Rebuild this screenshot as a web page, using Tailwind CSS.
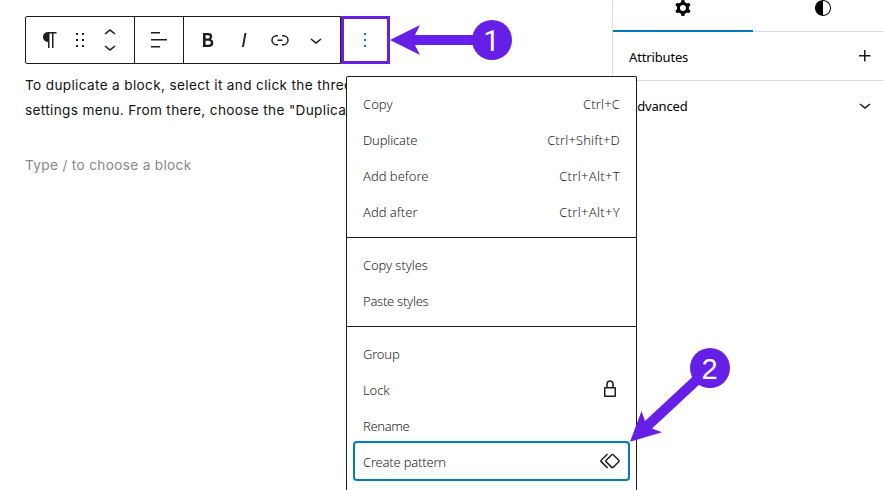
<!DOCTYPE html>
<html lang="en">
<head>
<meta charset="utf-8">
<title>Block editor</title>
<script src="https://cdn.jsdelivr.net/npm/@tailwindcss/browser@4"></script>
</head>
<body class="relative h-[490px] w-[884px] overflow-hidden bg-white font-['Noto_Sans',sans-serif] text-[13px] text-[#1e1e1e]">
<div class="flex h-full">
  <main class="w-[612px] shrink-0 pl-[25px] pt-4">
    <div class="flex h-12 w-[365px]">
      <div class="flex w-[316px] rounded-l-xs border border-[#1e1e1e]">
        <div class="flex w-[109px] items-center border-r border-[#1e1e1e] pl-3">
          <svg class="size-6 shrink-0" viewBox="0 0 24 24" fill="currentColor"><path d="m9.99609 14v-.2251l.00391.0001v6.225h1.5v-14.5h2.5v14.5h1.5v-14.5h3v-1.5h-8.50391c-2.76142 0-5 2.23858-5 5 0 2.7614 2.23858 5 5 5z"/></svg>
          <svg class="ml-[6px] size-6 shrink-0" viewBox="0 0 24 24" fill="currentColor"><path d="M8 7h2V5H8v2zm0 6h2v-2H8v2zm0 6h2v-2H8v2zm6-14v2h2V5h-2zm0 8h2v-2h-2v2zm0 6h2v-2h-2v2z"/></svg>
          <div class="ml-[6px] flex w-6 shrink-0 flex-col">
            <svg class="h-[19px] w-6" viewBox="0 0 24 19" fill="currentColor"><path d="M6.5 12.4L12 8l5.5 4.4-.9 1.2L12 10l-4.5 3.6-1-1.2z"/></svg>
            <svg class="h-[19px] w-6" viewBox="0 5 24 19" fill="currentColor"><path d="M17.5 11.6L12 16l-5.5-4.4.9-1.2L12 14l4.5-3.6 1 1.2z"/></svg>
          </div>
        </div>
        <div class="flex w-[49px] items-center border-r border-[#1e1e1e] pl-3">
          <svg class="size-6 shrink-0" viewBox="0 0 24 24" fill="currentColor"><path d="M13 5.5H4V4h9v1.5Zm7 7H4V11h16v1.5Zm-7 7H4V18h9v1.5Z"/></svg>
        </div>
        <div class="flex items-center gap-3 pl-3">
          <svg class="size-6 shrink-0" viewBox="0 0 24 24" fill="currentColor"><path d="M14.7 11.3c1-.6 1.5-1.6 1.5-3 0-2.3-1.3-3.4-4-3.4H7v14h5.8c1.4 0 2.5-.3 3.3-1 .8-.7 1.2-1.7 1.2-2.9.1-1.9-.8-3.1-2.6-3.7zm-5.1-4h2.3c.6 0 1.1.1 1.4.4.3.3.5.7.5 1.2s-.2 1-.5 1.2c-.3.3-.8.4-1.4.4H9.6V7.3zm4.6 9c-.4.3-1 .4-1.7.4H9.6v-3.9h2.9c.7 0 1.3.2 1.7.5.4.3.6.8.6 1.5s-.2 1.2-.6 1.5z"/></svg>
          <svg class="size-6 shrink-0" viewBox="0 0 24 24" fill="currentColor"><path d="M12.5 5L10 19h1.9l2.5-14z"/></svg>
          <svg class="size-6 shrink-0" viewBox="0 0 24 24" fill="currentColor"><path d="M10 17.389H8.444A5.194 5.194 0 1 1 8.444 7H10v1.5H8.444a3.694 3.694 0 0 0 0 7.389H10v1.5ZM14 7h1.556a5.194 5.194 0 0 1 0 10.39H14v-1.5h1.556a3.694 3.694 0 0 0 0-7.39H14V7Zm-4.5 6h5v-1.5h-5V13Z"/></svg>
          <svg class="size-6 shrink-0" viewBox="0 0 24 24" fill="currentColor"><path d="M17.5 11.6L12 16l-5.5-4.4.9-1.2L12 14l4.5-3.6 1 1.2z"/></svg>
        </div>
      </div>
      <div class="flex w-[49px] items-center border-3 border-[#651fe7] pl-[9px]">
        <svg class="size-6 shrink-0 text-[#007cba]" viewBox="0 0 24 24" fill="currentColor"><path d="M13 19h-2v-2h2v2zm0-6h-2v-2h2v2zm0-6h-2V5h2v2z"/></svg>
      </div>
    </div>
    <div class="mt-[9px] whitespace-nowrap font-['Inter',sans-serif] text-[13.6px] leading-[25px] tracking-[0.35px] text-[#111]">
      <p>To duplicate a block, select it and click the three<br>settings menu. From there, choose the "Duplicate</p>
      <p class="mt-[30px] text-[#888]">Type / to choose a block</p>
    </div>
  </main>
  <aside class="min-w-0 flex-1 border-l border-[#ddd]">
    <div class="flex h-8 border-b border-[#ddd]">
      <div class="flex h-8 w-[140px] shrink-0 justify-center border-b-2 border-[#007cba] text-black">
        <svg class="-mt-1 size-6" viewBox="0 0 24 24" fill="currentColor"><path fill-rule="evenodd" d="M10.289 4.836A1 1 0 0111.275 4h1.306a1 1 0 01.987.836l.244 1.466c.787.26 1.503.679 2.108 1.218l1.393-.522a1 1 0 011.216.437l.653 1.13a1 1 0 01-.23 1.273l-1.148.944a6.025 6.025 0 010 2.435l1.149.946a1 1 0 01.23 1.272l-.653 1.13a1 1 0 01-1.216.437l-1.394-.522c-.605.54-1.32.958-2.108 1.218l-.244 1.466a1 1 0 01-.987.836h-1.306a1 1 0 01-.986-.836l-.244-1.466a5.995 5.995 0 01-2.108-1.218l-1.394.522a1 1 0 01-1.217-.436l-.653-1.131a1 1 0 01.23-1.272l1.149-.946a6.026 6.026 0 010-2.435l-1.148-.944a1 1 0 01-.23-1.272l.653-1.131a1 1 0 011.217-.437l1.393.522a5.994 5.994 0 012.108-1.218l.244-1.466zM14.929 12a3 3 0 11-6 0 3 3 0 016 0z"/></svg>
      </div>
      <div class="flex w-[140px] shrink-0 justify-center text-black">
        <svg class="-mt-1 size-6" viewBox="0 0 24 24" fill="currentColor"><path d="M12 4c-4.4 0-8 3.6-8 8v.1c0 4.1 3.2 7.5 7.2 7.9h.8c4.4 0 8-3.6 8-8s-3.6-8-8-8zm0 15V5c3.9 0 7 3.1 7 7s-3.1 7-7 7z"/></svg>
      </div>
    </div>
    <div class="flex h-[49px] items-center justify-between border-b border-[#ddd] pl-4 pr-[7px]">
      <span class="mt-1 tracking-[-0.15px] text-black">Attributes</span>
      <svg class="size-6" viewBox="0 0 24 24" fill="currentColor"><path d="M11 12.5V17.5H12.5V12.5H17.5V11H12.5V6H11V11H6V12.5H11Z"/></svg>
    </div>
    <div class="flex h-12 items-center justify-between pl-4 pr-[7px]">
      <span class="mt-1 tracking-[-0.15px] text-black">Advanced</span>
      <svg class="size-6" viewBox="0 0 24 24" fill="currentColor"><path d="M17.5 11.6L12 16l-5.5-4.4.9-1.2L12 14l4.5-3.6 1 1.2z"/></svg>
    </div>
  </aside>
</div>

<div class="absolute left-[346px] top-[76px] h-[414px] w-[291px] overflow-hidden rounded-t-xs border border-b-0 border-[#1e1e1e] bg-white font-light">
  <div class="p-2">
    <div class="flex h-9 items-center justify-between px-2 pt-[3px]"><span class="tracking-[0.05px]">Copy</span><span class="tracking-[0.15px]">Ctrl+C</span></div>
    <div class="flex h-9 items-center justify-between px-2 pt-[3px]"><span class="tracking-[-0.15px]">Duplicate</span><span class="tracking-[0.15px]">Ctrl+Shift+D</span></div>
    <div class="flex h-9 items-center justify-between px-2 pt-[3px]"><span>Add before</span><span class="tracking-[0.3px]">Ctrl+Alt+T</span></div>
    <div class="flex h-9 items-center justify-between px-2 pt-[3px]"><span>Add after</span><span class="tracking-[0.3px]">Ctrl+Alt+Y</span></div>
  </div>
  <div class="border-t border-[#1e1e1e] p-2">
    <div class="flex h-9 items-center px-2 pt-[3px]"><span class="tracking-[-0.08px]">Copy styles</span></div>
    <div class="flex h-9 items-center px-2 pt-[3px]"><span class="tracking-[-0.27px]">Paste styles</span></div>
  </div>
  <div class="border-t border-[#1e1e1e] p-2">
    <div class="flex h-9 items-center px-2 pt-[3px]"><span class="tracking-[-0.2px]">Group</span></div>
    <div class="flex h-9 items-center justify-between pl-2 pr-[6px]"><span class="mt-[3px] tracking-[-0.1px]">Lock</span>
      <svg class="size-6" viewBox="0 0 24 24" fill="currentColor"><path d="M17 10h-1.2V7c0-2.1-1.7-3.8-3.8-3.8-2.1 0-3.8 1.7-3.8 3.8v3H7c-.6 0-1 .4-1 1v8c0 .6.4 1 1 1h10c.6 0 1-.4 1-1v-8c0-.6-.4-1-1-1zM9.8 7c0-1.2 1-2.2 2.2-2.2 1.2 0 2.2 1 2.2 2.2v3H9.8V7zm6.7 11.5h-9v-7h9v7z"/></svg>
    </div>
    <div class="flex h-9 items-center px-2 pt-[3px]"><span class="tracking-[-0.35px]">Rename</span></div>
    <div class="flex h-9 items-center justify-between rounded-xs pl-2 pr-[6px] ring-2 ring-[#007cba]"><span class="mt-[3px] tracking-[-0.2px]">Create pattern</span>
      <svg class="size-6" viewBox="0 0 24 24" fill="currentColor"><path d="M21.3 10.8l-5.6-5.6c-.7-.7-1.8-.7-2.5 0l-5.6 5.6c-.7.7-.7 1.8 0 2.5l5.6 5.6c.3.3.8.5 1.2.5s.9-.2 1.2-.5l5.6-5.6c.8-.7.8-1.9.1-2.5zm-1 1.4l-5.6 5.6c-.1.1-.3.1-.4 0l-5.6-5.6c-.1-.1-.1-.3 0-.4l5.6-5.6s.1-.1.2-.1.1 0 .2.1l5.6 5.6c.1.1.1.3 0 .4zm-16.6-.4L10 5.5l-1-1-6.3 6.3c-.7.7-.7 1.8 0 2.5L9 19.5l1.1-1.1-6.3-6.3c-.2 0-.2-.2-.1-.3z"/></svg>
    </div>
  </div>
</div>

<!-- Step callouts -->
<svg class="pointer-events-none absolute inset-0" width="884" height="490" viewBox="0 0 884 490">
  <g fill="#651fe7">
    <path d="M390 40L420 25L415 35H480V45H415L420 55Z"/>
    <circle cx="492" cy="40" r="20"/>
    <path d="M630 441.7L641.5 411L645 421L695 374.5L702 382L652 428.5L662 432.3Z"/>
    <circle cx="710" cy="368" r="20"/>
  </g>
  <g class="text-[29px]" fill="#fff" text-anchor="middle">
    <text class="font-['Roboto',sans-serif]" x="491.5" y="51">1</text>
    <text class="font-['Liberation_Sans',sans-serif]" x="709.5" y="379">2</text>
  </g>
</svg>
</body>
</html>
